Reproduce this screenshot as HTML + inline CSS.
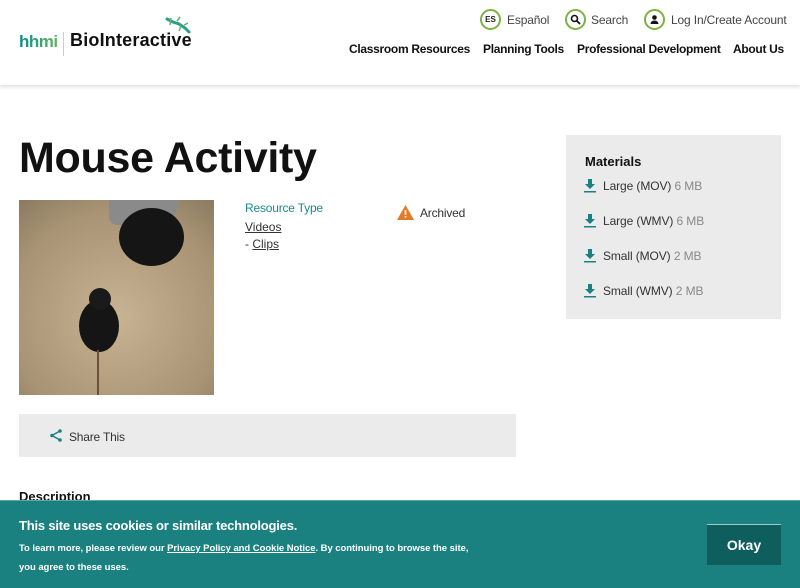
<!DOCTYPE html>
<html><head><meta charset="utf-8"><style>
*{margin:0;padding:0;box-sizing:border-box}
body{width:800px;height:588px;overflow:hidden;font-family:"Liberation Sans",Arial,sans-serif;background:#fff;position:relative;color:#222}
.hdr{position:absolute;left:0;top:0;width:800px;height:85px;background:#fff;box-shadow:0 2px 3px rgba(0,0,0,.12)}
.abs{position:absolute}
.ic{position:absolute;width:21px;height:21px;border:2px solid #7cb342;border-radius:50%;font-size:8px;font-weight:bold;text-align:center;line-height:17px}
.top{font-size:12px;color:#444;letter-spacing:-0.15px}
.nav{font-size:12px;font-weight:bold;color:#111;letter-spacing:-0.3px}
.mat{position:absolute;left:566px;top:135px;width:215px;height:184px;background:#ebebeb}
.row{position:absolute;left:18px;font-size:12px;color:#333;letter-spacing:-0.1px}
.row span{color:#888}
.dl{display:inline-block;width:12px;height:14px;margin-right:7px;vertical-align:-3px;position:relative}
</style></head><body>
<div class="hdr">
 <div class="abs" style="left:19px;top:32px;font-size:17px;font-weight:bold;letter-spacing:-0.5px;background:linear-gradient(90deg,#0a8a8a,#5cb85c);-webkit-background-clip:text;color:transparent">hhmi</div>
 <div class="abs" style="left:63px;top:32px;width:1px;height:24px;background:#ccc"></div>
 <div class="abs" style="left:70px;top:30px;font-size:18px;font-weight:bold;color:#111;letter-spacing:0.2px">BioInteractive</div>
 <svg class="abs" style="left:165px;top:16px" width="26" height="18" viewBox="0 0 26 18"><path d="M2 3 L8 6 L14 8 L20 12 L24 16" stroke="#2a9d8f" stroke-width="3" fill="none" stroke-linecap="round"/><path d="M6 2 L5 9 M12 5 L15 1 M16 10 L14 15 M19 9 L23 7" stroke="#5cb85c" stroke-width="1.5"/></svg>
 <div class="ic" style="left:480px;top:9px">ES</div><div class="abs top" style="left:507px;top:13px">Español</div>
 <div class="ic" style="left:565px;top:9px"><svg width="11" height="11" viewBox="0 0 11 11" style="margin-top:3px"><circle cx="4.5" cy="4.5" r="3" stroke="#111" stroke-width="1.6" fill="none"/><path d="M7 7L10 10" stroke="#111" stroke-width="1.8"/></svg></div><div class="abs top" style="left:591px;top:13px">Search</div>
 <div class="ic" style="left:644px;top:9px"><svg width="11" height="11" viewBox="0 0 11 11" style="margin-top:3px"><circle cx="5.5" cy="3.5" r="2.3" fill="#111"/><path d="M1.5 10a4 3.5 0 0 1 8 0z" fill="#111"/></svg></div><div class="abs top" style="left:671px;top:13px">Log In/Create Account</div>
 <div class="abs nav" style="left:349px;top:42px">Classroom Resources</div>
 <div class="abs nav" style="left:483px;top:42px">Planning Tools</div>
 <div class="abs nav" style="left:577px;top:42px">Professional Development</div>
 <div class="abs nav" style="left:733px;top:42px">About Us</div>
</div>
<div class="abs" style="left:19px;top:134px;font-size:43px;font-weight:bold;color:#111;letter-spacing:-0.3px">Mouse Activity</div>
<div class="abs" style="left:19px;top:200px;width:195px;height:195px;background:radial-gradient(circle at 50% 60%,#c8b493,#a89474 70%,#8a7a60);overflow:hidden">
 <div class="abs" style="left:90px;top:0;width:70px;height:25px;background:#8a8a8a;border-radius:0 0 30px 10px"></div>
 <div class="abs" style="left:100px;top:8px;width:65px;height:58px;background:#151515;border-radius:50%"></div>
 <div class="abs" style="left:60px;top:100px;width:40px;height:52px;background:#151515;border-radius:50%"></div>
 <div class="abs" style="left:70px;top:88px;width:22px;height:22px;background:#1a1a1a;border-radius:50%"></div>
 <div class="abs" style="left:78px;top:150px;width:2px;height:45px;background:#6a5040"></div>
</div>
<div class="abs" style="left:245px;top:201px;font-size:12px;color:#1a8a8a;letter-spacing:-0.2px">Resource Type</div>
<div class="abs" style="left:245px;top:220px;font-size:12px;color:#333;text-decoration:underline">Videos</div>
<div class="abs" style="left:245px;top:237px;font-size:12px;color:#333">- <u>Clips</u></div>
<svg class="abs" style="left:397px;top:205px" width="17" height="15" viewBox="0 0 17 15"><path d="M8.5 0L17 15H0z" fill="#e07b2a"/><rect x="7.7" y="5" width="1.6" height="5" fill="#fff"/><rect x="7.7" y="11" width="1.6" height="1.6" fill="#fff"/></svg>
<div class="abs" style="left:420px;top:206px;font-size:12px;color:#333;letter-spacing:-0.2px">Archived</div>
<div class="mat">
 <div class="abs" style="left:19px;top:19px;font-size:13px;font-weight:bold;color:#111">Materials</div>
 <div class="row" style="top:44px"><svg class="dl" viewBox="0 0 12 14"><path d="M4 0h4v5h3L6 10 1 5h3z" fill="#1a8080"/><rect x="0" y="12" width="12" height="1.5" fill="#1a8080"/></svg>Large (MOV) <span>6 MB</span></div>
 <div class="row" style="top:79px"><svg class="dl" viewBox="0 0 12 14"><path d="M4 0h4v5h3L6 10 1 5h3z" fill="#1a8080"/><rect x="0" y="12" width="12" height="1.5" fill="#1a8080"/></svg>Large (WMV) <span>6 MB</span></div>
 <div class="row" style="top:114px"><svg class="dl" viewBox="0 0 12 14"><path d="M4 0h4v5h3L6 10 1 5h3z" fill="#1a8080"/><rect x="0" y="12" width="12" height="1.5" fill="#1a8080"/></svg>Small (MOV) <span>2 MB</span></div>
 <div class="row" style="top:149px"><svg class="dl" viewBox="0 0 12 14"><path d="M4 0h4v5h3L6 10 1 5h3z" fill="#1a8080"/><rect x="0" y="12" width="12" height="1.5" fill="#1a8080"/></svg>Small (WMV) <span>2 MB</span></div>
</div>
<div class="abs" style="left:19px;top:414px;width:497px;height:43px;background:#ebebeb">
 <svg class="abs" style="left:31px;top:15px" width="12" height="13" viewBox="0 0 12 13"><path d="M10 2L2 6.5 10 11" stroke="#1a8080" stroke-width="1.5" fill="none"/><circle cx="10" cy="2" r="1.8" fill="#1a8080"/><circle cx="2" cy="6.5" r="1.8" fill="#1a8080"/><circle cx="10" cy="11" r="1.8" fill="#1a8080"/></svg>
 <div class="abs" style="left:50px;top:16px;font-size:12px;color:#333;letter-spacing:-0.2px">Share This</div>
</div>
<div class="abs" style="left:19px;top:489px;font-size:13px;font-weight:bold;color:#111">Description</div>
<div class="abs" style="left:0;top:500px;width:800px;height:88px;background:#1a8080;border-top:1px solid #5aa">
 <div class="abs" style="left:19px;top:17px;font-size:13px;font-weight:bold;color:#fff;letter-spacing:-0.2px">This site uses cookies or similar technologies.</div>
 <div class="abs" style="left:19px;top:42px;font-size:9.5px;font-weight:bold;color:#fff;letter-spacing:-0.05px">To learn more, please review our <u>Privacy Policy and Cookie Notice</u>. By continuing to browse the site,</div>
 <div class="abs" style="left:19px;top:61px;font-size:9.5px;font-weight:bold;color:#fff;letter-spacing:-0.05px">you agree to these uses.</div>
 <div class="abs" style="left:707px;top:23px;width:74px;height:41px;background:#0f5e5e;border-top:1px solid #9cc;color:#fff;font-weight:bold;font-size:14px;text-align:center;line-height:40px">Okay</div>
</div>
</body></html>
